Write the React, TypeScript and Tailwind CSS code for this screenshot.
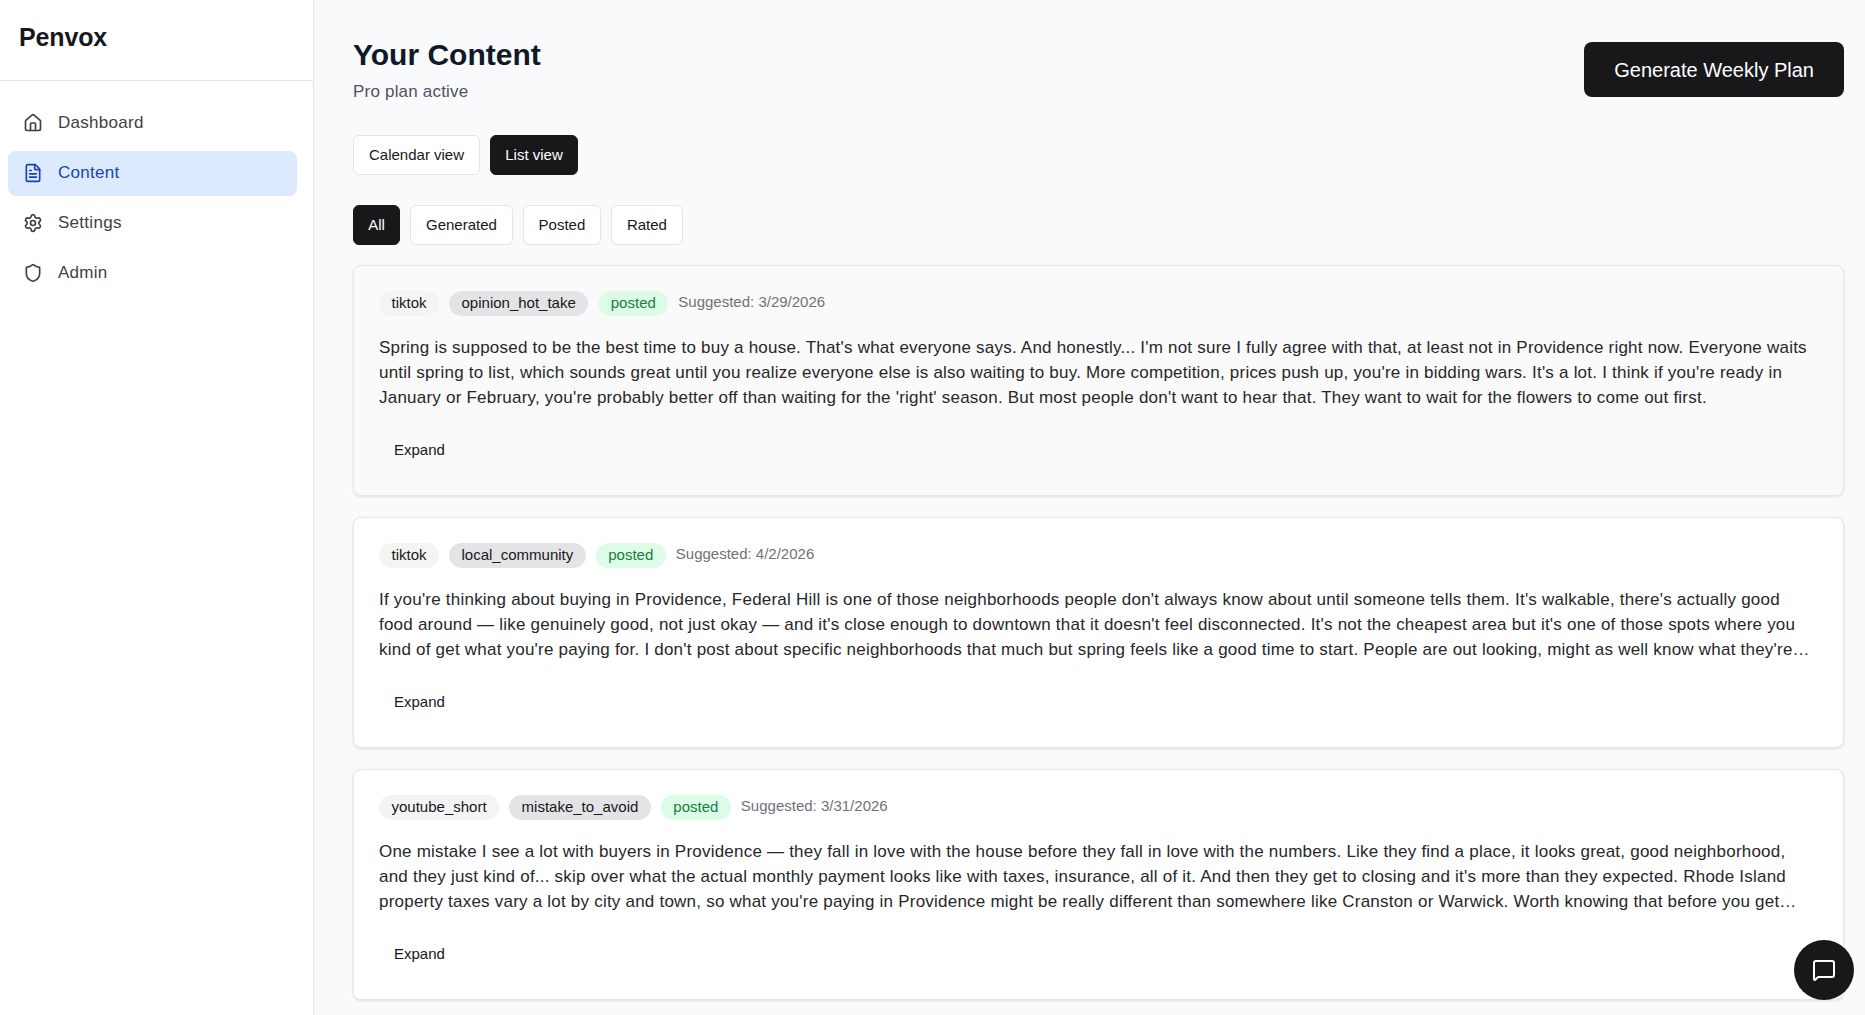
import { FileText, House, MessageSquare, Settings, Shield } from "lucide-react";

const navItems = [
	{ label: "Dashboard", icon: House },
	{ label: "Content", icon: FileText, active: true },
	{ label: "Settings", icon: Settings },
	{ label: "Admin", icon: Shield },
];

const cards = [
	{
		platform: "tiktok",
		format: "opinion_hot_take",
		date: "3/29/2026",
		hovered: true,
		text: "Spring is supposed to be the best time to buy a house. That's what everyone says. And honestly... I'm not sure I fully agree with that, at least not in Providence right now. Everyone waits until spring to list, which sounds great until you realize everyone else is also waiting to buy. More competition, prices push up, you're in bidding wars. It's a lot. I think if you're ready in January or February, you're probably better off than waiting for the 'right' season. But most people don't want to hear that. They want to wait for the flowers to come out first.",
	},
	{
		platform: "tiktok",
		format: "local_community",
		date: "4/2/2026",
		text: "If you're thinking about buying in Providence, Federal Hill is one of those neighborhoods people don't always know about until someone tells them. It's walkable, there's actually good food around — like genuinely good, not just okay — and it's close enough to downtown that it doesn't feel disconnected. It's not the cheapest area but it's one of those spots where you kind of get what you're paying for. I don't post about specific neighborhoods that much but spring feels like a good time to start. People are out looking, might as well know what they're…",
	},
	{
		platform: "youtube_short",
		format: "mistake_to_avoid",
		date: "3/31/2026",
		text: "One mistake I see a lot with buyers in Providence — they fall in love with the house before they fall in love with the numbers. Like they find a place, it looks great, good neighborhood, and they just kind of... skip over what the actual monthly payment looks like with taxes, insurance, all of it. And then they get to closing and it's more than they expected. Rhode Island property taxes vary a lot by city and town, so what you're paying in Providence might be really different than somewhere like Cranston or Warwick. Worth knowing that before you get…",
	},
];

function OutlineButton({
	label,
	active,
	className = "px-[15px]",
}: {
	label: string;
	active?: boolean;
	className?: string;
}) {
	return (
		<button
			className={`h-10 rounded-md border text-[15px] ${className} ${
				active
					? "border-[#18181b] bg-[#18181b] text-white"
					: "border-[#e4e4e7] bg-white text-[#18181b]"
			}`}
		>
			{label}
		</button>
	);
}

function Pill({ label, className }: { label: string; className: string }) {
	return (
		<span className={`rounded-full px-[12.5px] pb-[4px] pt-[2px] text-[15px] leading-[19px] ${className}`}>
			{label}
		</span>
	);
}

export default function App() {
	return (
		<div className="flex h-screen overflow-hidden bg-[#f9fafb] font-['Liberation_Sans',Arial,sans-serif]">
			<aside className="flex w-[314px] shrink-0 flex-col border-r border-[#e5e7eb] bg-white">
				<div className="flex h-[81px] items-center border-b border-[#e5e7eb] px-[19px] pb-1">
					<span className="text-[25px] font-bold tracking-[-0.15px] text-[#18181b]">Penvox</span>
				</div>
				<nav className="flex flex-col gap-[5px] py-[20px] pl-2 pr-4">
					{navItems.map((item) => (
						<a
							key={item.label}
							className={`flex h-[45px] items-center gap-[15px] rounded-lg px-[15px] pb-[2px] text-[17px] tracking-[0.28px] ${
								item.active ? "bg-[#dbeafe] text-[#1e40af]" : "text-[#3f3f46]"
							}`}
						>
							<item.icon size={20} strokeWidth={2} className="shrink-0" />
							{item.label}
						</a>
					))}
				</nav>
			</aside>

			<main className="min-w-0 flex-1 pl-[39px] pr-[21px] pt-[33px]">
				<div className="flex items-start justify-between">
					<div>
						<h1 className="text-[30px] font-bold leading-[44px] text-[#111827]">Your Content</h1>
						<p className="mt-[3px] text-[17px] leading-6 tracking-[0.2px] text-[#52525b]">Pro plan active</p>
					</div>
					<button className="mt-[9px] h-[55px] rounded-lg bg-[#18181b] px-[30px] text-xl text-white">
						Generate Weekly Plan
					</button>
				</div>

				<div className="mt-[31px] flex gap-[10px]">
					<OutlineButton label="Calendar view" />
					<OutlineButton label="List view" active className="w-[88px]" />
				</div>

				<div className="mt-[30px] flex gap-[10px]">
					<OutlineButton label="All" active className="w-[47px]" />
					<OutlineButton label="Generated" />
					<OutlineButton label="Posted" className="w-[78px]" />
					<OutlineButton label="Rated" />
				</div>

				<div className="mt-[20px] flex flex-col gap-[21px]">
					{cards.map((card) => (
						<article
							key={card.date}
							className={`h-[231px] rounded-lg border border-[#e5e7eb] px-[25px] pt-[25px] shadow-[0_1px_3px_rgba(0,0,0,0.1)] ${
								card.hovered ? "bg-[#fafafa]" : "bg-white"
							}`}
						>
							<div className="flex items-center gap-[10px]">
								<Pill label={card.platform} className="bg-[#f4f4f5] text-[#18181b]" />
								<Pill label={card.format} className="bg-[#e4e4e7] text-[#18181b]" />
								<Pill label="posted" className="bg-[#dcfce7] text-[#15803d]" />
								<span className="pb-[2px] text-[15px] text-[#71717a]">Suggested: {card.date}</span>
							</div>
							<p className="mt-[19px] text-[17px] leading-[25px] tracking-[0.22px] text-[#27272a]">
								{card.text}
							</p>
							<button className="mt-[20px] h-10 px-[15px] text-[15px] text-[#18181b]">Expand</button>
						</article>
					))}
				</div>
			</main>

			<button className="fixed bottom-[15px] right-[11px] flex h-[60px] w-[60px] items-center justify-center rounded-full bg-[#18181b] text-white">
				<MessageSquare size={24} strokeWidth={2} />
			</button>
		</div>
	);
}
